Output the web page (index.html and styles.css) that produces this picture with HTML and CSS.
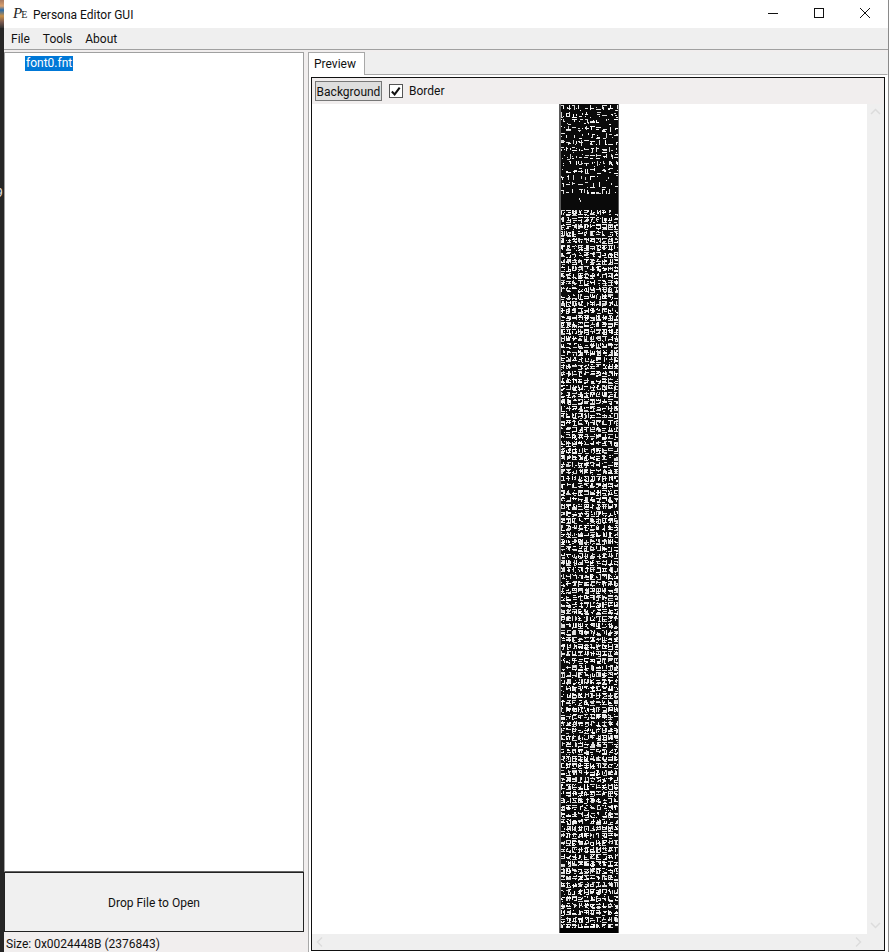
FILE: index.html
```html
<!DOCTYPE html>
<html lang="en">
<head>
<meta charset="utf-8">
<title>Persona Editor GUI</title>
<link rel="stylesheet" href="styles.css">
</head>
<body>
<div class="desktop">
  <div class="desktop-top"></div>
  <div class="desktop-char">9</div>
</div>
<div class="window">
  <header class="titlebar">
    <span class="logo"><span class="logo-p">P</span><span class="logo-e">E</span></span>
    <span class="title">Persona Editor GUI</span>
    <div class="controls">
      <svg class="ctl" width="46" height="28" viewBox="0 0 46 28"><path d="M18 13.5h10" stroke="#111" fill="none"/></svg>
      <svg class="ctl" width="46" height="28" viewBox="0 0 46 28"><rect x="18.5" y="8.5" width="9" height="9" stroke="#111" fill="none"/></svg>
      <svg class="ctl" width="46" height="28" viewBox="0 0 46 28"><path d="M18 8l10 10M28 8L18 18" stroke="#111" fill="none"/></svg>
    </div>
  </header>
  <nav class="menubar">
    <span class="menu-item">File</span>
    <span class="menu-item">Tools</span>
    <span class="menu-item">About</span>
  </nav>
  <main class="main">
    <section class="left">
      <div class="tree"><span class="tree-item">font0.fnt</span></div>
      <button class="drop">Drop File to Open</button>
      <div class="status">Size: 0x0024448B (2376843)</div>
    </section>
    <section class="right">
      <div class="tabs"><div class="tab">Preview</div></div>
      <div class="tab-body">
        <div class="frame">
          <div class="toolbar">
            <button class="bg-btn">Background</button>
            <label class="check">
              <span class="box"><svg width="13" height="13" viewBox="0 0 13 13"><path d="M2 6.500l3 3.200 5.500-7.500" stroke="#111" stroke-width="2.200" fill="none"/></svg></span>
              <span>Border</span>
            </label>
          </div>
          <div class="viewer">
            <div class="viewer-row">
              <div class="canvas-area"><canvas id="atlas" class="atlas" width="60" height="829"></canvas></div>
              <div class="vscroll">
                <svg width="17" height="17" viewBox="0 0 17 17"><path d="M4 10l4.500-4.500L13 10" stroke="#dcdcdc" stroke-width="1.500" fill="none"/></svg>
                <svg width="17" height="17" viewBox="0 0 17 17"><path d="M4 6l4.500 4.500L13 6" stroke="#dcdcdc" stroke-width="1.500" fill="none"/></svg>
              </div>
            </div>
            <div class="hscroll">
              <svg width="17" height="16" viewBox="0 0 17 16"><path d="M10 3.500L5.500 8l4.500 4.500" stroke="#dcdcdc" stroke-width="1.500" fill="none"/></svg>
              <svg width="17" height="16" viewBox="0 0 17 16"><path d="M6 3.500L10.500 8 6 12.500" stroke="#dcdcdc" stroke-width="1.500" fill="none"/></svg>
            </div>
          </div>
        </div>
      </div>
    </section>
  </main>
</div>
<script src="atlas.js"></script>
</body>
</html>
```
FILE: styles.css
```css
* { box-sizing: border-box; }
html, body { margin: 0; height: 100%; }
body {
  display: flex;
  width: 889px;
  height: 952px;
  overflow: hidden;
  font: 12px/16px Roboto, sans-serif;
  color: #111;
  background: #fff;
}
.desktop {
  width: 4px;
  flex: none;
  overflow: hidden;
  background: #262626;
  color: #e8e8e8;
}
.desktop-top {
  height: 28px;
  background: linear-gradient(180deg, #a97a60 0, #d8a070 6px, #2a6aa8 10px, #c89048 16px, #7a5a50 22px, #333 28px);
}
.desktop-char {
  margin-top: 158px;
  margin-left: -4px;
  font-size: 12px;
  line-height: 14px;
}
.window {
  flex: 1;
  display: flex;
  flex-direction: column;
  min-width: 0;
  border-right: 1px solid #8a8a8a;
}
.titlebar {
  height: 28px;
  flex: none;
  display: flex;
  align-items: center;
  background: #fff;
  padding-left: 9px;
}
.logo {
  width: 20px;
  display: flex;
  align-items: baseline;
  font-family: "Liberation Serif", serif;
  font-style: italic;
  color: #222;
}
.logo-p { font-size: 15px; }
.logo-e { font-size: 10px; margin-left: -1px; font-style: normal; }
.title { white-space: nowrap; padding-top: 1px; }
.controls { margin-left: auto; display: flex; }
.ctl { display: block; }
.menubar {
  height: 22px;
  flex: none;
  display: flex;
  align-items: center;
  gap: 13px;
  padding: 1px 0 0 7px;
  background: #efefef;
  border-bottom: 1px solid #a0a0a0;
}
.main { flex: 1; display: flex; min-height: 0; background: #f1eeee; }
.left {
  width: 300px;
  flex: none;
  display: flex;
  flex-direction: column;
  padding-top: 2px;
}
.tree {
  flex: 1;
  background: #fff;
  border: 1px solid #a0a0a0;
  border-bottom-color: #666;
  padding: 2px 0 0 20px;
}
.tree-item {
  display: inline-block;
  height: 15px;
  line-height: 15px;
  padding: 0 1px;
  background: #0078d7;
  color: #fff;
}
.drop {
  height: 60px;
  flex: none;
  font: inherit;
  color: #111;
  background: #f0f0f0;
  border: 1px solid #222;
  padding: 2px 0 0;
}
.status { height: 20px; flex: none; padding: 4px 0 0 2px; white-space: nowrap; }
.right {
  flex: 1;
  display: flex;
  flex-direction: column;
  padding: 2px 0 0 4px;
  min-width: 0;
}
.tabs { height: 22px; flex: none; display: flex; background: #efefef; }
.tab {
  width: 57px;
  height: 23px;
  padding: 3px 0 0 5px;
  background: #fff;
  border: 1px solid #a8a8a8;
  border-bottom: 0;
  position: relative;
  z-index: 1;
}
.tab-body {
  flex: 1;
  min-height: 0;
  background: #fff;
  border: 1px solid #a8a8a8;
  border-right-color: #fff;
  border-bottom: 0;
  padding: 2px 2px 1px 2px;
}
.frame {
  height: 100%;
  display: flex;
  flex-direction: column;
  border: 1px solid #111;
  background: #fff;
}
.toolbar {
  height: 26px;
  flex: none;
  display: flex;
  align-items: center;
  gap: 7px;
  padding: 0 0 0 3px;
  background: #f1eeee;
}
.bg-btn {
  width: 67px;
  height: 20px;
  font: inherit;
  color: #111;
  padding: 1px 0 0;
  background: #dedede;
  border: 1px solid #777;
}
.check { display: flex; align-items: center; gap: 6px; }
.box {
  width: 14px;
  height: 14px;
  background: #fff;
  border: 1px solid #555;
  display: flex;
  align-items: center;
  justify-content: center;
}
.box svg { display: block; }
.viewer { flex: 1; min-height: 0; display: flex; flex-direction: column; }
.viewer-row { flex: 1; min-height: 0; display: flex; }
.canvas-area {
  flex: 1;
  display: flex;
  justify-content: center;
  background: #fff;
  min-width: 0;
  padding-right: 1px;
}
.atlas { display: block; width: 60px; height: 829px; }
.vscroll {
  width: 17px;
  flex: none;
  background: #efefef;
  display: flex;
  flex-direction: column;
  justify-content: space-between;
}
.hscroll {
  height: 16px;
  flex: none;
  background: #efefef;
  display: flex;
  justify-content: space-between;
  padding-right: 17px;
}
.vscroll svg, .hscroll svg { display: block; }
```
FILE: atlas.js
```js
(function () {
  var canvas = document.getElementById('atlas');
  var ctx = canvas.getContext('2d');
  var W = canvas.width, H = canvas.height;
  var seed = 20240611;
  function rnd() {
    seed = (seed * 1664525 + 1013904223) >>> 0;
    return seed / 4294967296;
  }
  function shade() {
    var v = 205 + Math.floor(rnd() * 50);
    return 'rgb(' + v + ',' + v + ',' + v + ')';
  }
  ctx.fillStyle = '#0a0a0a';
  ctx.fillRect(0, 0, W, H);

  /* strokes per glyph cell, by height in the atlas */
  function strokes(y) {
    if (y < 70) return 3;
    if (y < 86) return 2;
    if (y < 104) return 0;
    if (y > 820) return 0;
    return 8;
  }
  var cellW = 6, cellH = 7;
  for (var r = 0; r * cellH < H; r++) {
    var y0 = r * cellH + 1;
    for (var c = 0; c < 10; c++) {
      var x0 = 1 + c * cellW;
      var n = strokes(y0);
      if (n === 0) continue;
      var count = Math.round(n * (0.45 + rnd() * 0.9));
      for (var s = 0; s < count; s++) {
        ctx.fillStyle = shade();
        var kind = rnd();
        if (kind < 0.45) {
          var len = 2 + Math.floor(rnd() * 4);
          var sx = x0 + Math.floor(rnd() * (6 - len));
          ctx.fillRect(sx, y0 + Math.floor(rnd() * 6), len, 1);
        } else if (kind < 0.75) {
          var hgt = 2 + Math.floor(rnd() * 4);
          ctx.fillRect(x0 + Math.floor(rnd() * 5), y0 + Math.floor(rnd() * (6 - hgt)), 1, hgt);
        } else {
          ctx.fillRect(x0 + Math.floor(rnd() * 5), y0 + Math.floor(rnd() * 6), 1, 1);
        }
      }
    }
  }
  /* a lone mark in the empty band */
  ctx.fillStyle = '#ddd';
  ctx.fillRect(20, 94, 1, 2);
  ctx.fillRect(21, 96, 1, 2);

  /* soften: the original is a scaled-down bitmap */
  var copy = document.createElement('canvas');
  copy.width = W;
  copy.height = H;
  copy.getContext('2d').drawImage(canvas, 0, 0);
  ctx.filter = 'blur(0.35px)';
  ctx.drawImage(copy, 0, 0);
  ctx.filter = 'none';

  ctx.fillStyle = '#5a5a5a';
  ctx.fillRect(0, 0, 2, H);
  ctx.fillRect(W - 1, 0, 1, H);
  ctx.fillStyle = '#000';
  ctx.fillRect(1, H - 5, W - 2, 5);
})();
```
